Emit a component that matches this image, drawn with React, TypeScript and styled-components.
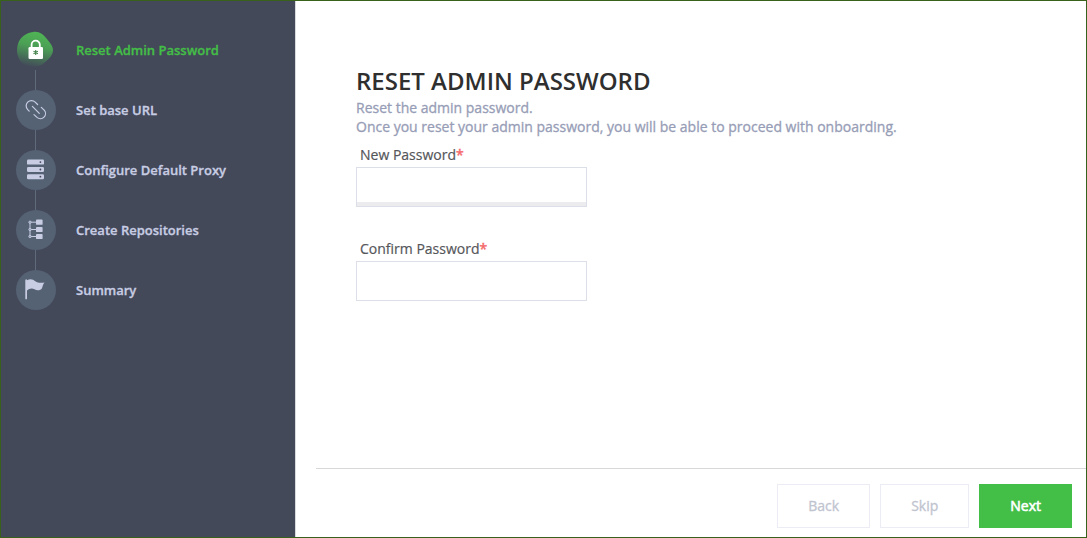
import React from "react";
import styled, { createGlobalStyle } from "styled-components";

const GlobalStyle = createGlobalStyle`
  *, *::before, *::after { box-sizing: border-box; }
  body { margin: 0; background: #fff; }
  body, button, input { font-family: "Open Sans", "Noto Sans", sans-serif; }
`;

const Wizard = styled.div`
  display: flex;
  min-height: 100vh;
  border: 1px solid #38611b;
`;

const Sidebar = styled.nav`
  flex: 0 0 295px;
  padding: 29px 15px;
  background: #434959;
  border-right: 1px solid #d8dadd;
`;

const StepList = styled.ol`
  display: flex;
  flex-direction: column;
  margin: 0;
  padding: 0;
  list-style: none;
`;

const Step = styled.li<{ $active?: boolean }>`
  display: grid;
  grid-template-columns: 40px 1fr;
  column-gap: 20px;
  align-items: center;
  font-size: 13px;
  line-height: 20px;
  font-weight: 600;
  -webkit-text-stroke: 0.3px currentColor;
  color: ${(p) => (p.$active ? "#43be47" : "#c8cde4")};

  &:not(:last-child)::after {
    content: "";
    width: 1px;
    height: 20px;
    margin-left: 19px;
    background: #5f6a7b;
  }
`;

const StepIcon = styled.span<{ $active?: boolean }>`
  display: flex;
  width: 40px;
  height: 40px;
  border-radius: 50%;
  background: ${(p) => (p.$active ? "none" : "#556274")};
  color: #c8cde4;
`;

const Main = styled.main`
  display: flex;
  flex: 1;
  flex-direction: column;
  min-width: 0;
`;

const Content = styled.form`
  flex: 1;
  padding: 63px 60px 24px;
`;

const Title = styled.h1`
  margin: 0 0 1px;
  font-size: 24px;
  line-height: 33px;
  font-weight: 600;
  color: #2f2f2f;
`;

const Description = styled.p`
  margin: 0 0 9px;
  font-size: 14px;
  line-height: 19px;
  color: #979db6;
  -webkit-text-stroke: 0.3px currentColor;
`;

const Field = styled.div`
  display: flex;
  flex-direction: column;
  width: 231px;
  margin-bottom: 32px;
`;

const Label = styled.label`
  padding-left: 4px;
  margin-bottom: 2px;
  font-size: 14px;
  line-height: 20px;
  color: #55565a;
  -webkit-text-stroke: 0.2px currentColor;
`;

const Required = styled.span`
  color: #f4696b;
  -webkit-text-stroke: 0.5px currentColor;
`;

const PasswordInput = styled.input<{ $raised?: boolean }>`
  width: 100%;
  height: 40px;
  padding: 0 10px;
  border: 1px solid #dcdfe8;
  border-radius: 0;
  background: #fff;
  font-size: 14px;
  outline: none;
  box-shadow: ${(p) => (p.$raised ? "inset 0 -4px 0 #ececee" : "none")};
`;

const Footer = styled.footer`
  display: flex;
  justify-content: flex-end;
  gap: 10px;
  margin-left: 20px;
  padding: 15px 14px 9px 0;
  border-top: 1px solid #d8d8da;
`;

const Button = styled.button<{ $primary?: boolean }>`
  height: 44px;
  padding: 0 30px;
  border: 1px solid ${(p) => (p.$primary ? "#43be47" : "#ececf4")};
  border-radius: 0;
  background: ${(p) => (p.$primary ? "#43be47" : "#fff")};
  color: ${(p) => (p.$primary ? "#fff" : "#c0c4cf")};
  font-size: 14px;
  line-height: 20px;
  font-weight: 400;
  -webkit-text-stroke: ${(p) => (p.$primary ? "0.6px" : "0.3px")} currentColor;
`;

const Drawing = ({ children }: { children: React.ReactNode }) => (
  <svg width="40" height="40" viewBox="0 0 40 40" fill="none" aria-hidden="true">
    {children}
  </svg>
);

const LockIcon = () => (
  <Drawing>
    <defs>
      <linearGradient id="blob" x1="24" y1="3" x2="17" y2="37" gradientUnits="userSpaceOnUse">
        <stop offset="0" stopColor="#4fb454" />
        <stop offset="0.4" stopColor="#4b9f55" />
        <stop offset="1" stopColor="#434b59" />
      </linearGradient>
    </defs>
    <path
      d="M17 2C23 1 27 4 31 9C34 13 37 16 37 20C37 25 33 29 28 33C23 38 12 38 6 33C1 28 0 20 2 14C4 7 10 3 17 2Z"
      fill="url(#blob)"
    />
    <path d="M15.6 18V14.8a4.1 4.1 0 0 1 8.2 0V18" stroke="#fff" strokeWidth="1.8" />
    <rect x="12.5" y="17" width="14.5" height="12" rx="1.3" fill="#fff" />
    <path d="M19.7 20v5M17.5 21.3l4.4 2.5M21.9 21.3l-4.4 2.5" stroke="#43834c" strokeWidth="1.1" />
  </Drawing>
);

const LinkIcon = () => (
  <Drawing>
    <g stroke="currentColor" strokeWidth="1.2" strokeLinecap="round">
      <path d="M13.2 21.1L11.7 19.6A5.3 5.3 0 0 1 19.2 12.1L21.6 14.5" />
      <path d="M16.4 16.4L23.3 23.3" />
      <path d="M18 24.6L21 27.4A5.1 5.1 0 0 0 28.2 20.2L25.3 17.3" />
    </g>
  </Drawing>
);

const ServerIcon = () => (
  <Drawing>
    {[9.6, 17, 24.2].map((y) => (
      <g key={y}>
        <rect x="11" y={y} width="17" height="5" rx="1.2" fill="currentColor" />
        <circle cx="24.4" cy={y + 2.5} r="0.9" fill="#434959" />
      </g>
    ))}
  </Drawing>
);

const RepositoryIcon = () => (
  <Drawing>
    <path d="M14 12.2V26.5M14 12.2h7M14 19.5h7M14 26.5h7" stroke="currentColor" strokeWidth="1" />
    {[12.2, 19.5, 26.5].map((y) => (
      <g key={y}>
        <circle cx="14" cy={y} r="1.2" fill="#8f99ae" stroke="currentColor" strokeWidth="0.8" />
        <rect x="20" y={y - 2.6} width="6.6" height="5.2" rx="0.9" fill="currentColor" />
      </g>
    ))}
  </Drawing>
);

const FlagIcon = () => (
  <Drawing>
    <path
      d="M9.3 10.2c0-1 1.7-1.2 1.7 0C14 8.5 17 9 19.3 11.2C22 13 25 13 28.5 12.4C27 14 26.7 16 26 18.2C24.5 20.5 21 20.9 18.5 19.3C15.8 17.7 13 18.6 11 20.6V28.4a.8.8 0 0 1-1.7 0Z"
      fill="currentColor"
    />
  </Drawing>
);

const steps = [
  { label: "Reset Admin Password", Icon: LockIcon },
  { label: "Set base URL", Icon: LinkIcon },
  { label: "Configure Default Proxy", Icon: ServerIcon },
  { label: "Create Repositories", Icon: RepositoryIcon },
  { label: "Summary", Icon: FlagIcon },
];

export default function App() {
  return (
    <>
      <GlobalStyle />
      <Wizard>
        <Sidebar>
          <StepList>
            {steps.map(({ label, Icon }, i) => (
              <Step key={label} $active={i === 0} aria-current={i === 0 ? "step" : undefined}>
                <StepIcon $active={i === 0}>
                  <Icon />
                </StepIcon>
                <span>{label}</span>
              </Step>
            ))}
          </StepList>
        </Sidebar>
        <Main>
          <Content id="password-form" onSubmit={(e) => e.preventDefault()}>
            <Title>RESET ADMIN PASSWORD</Title>
            <Description>
              Reset the admin password.
              <br />
              Once you reset your admin password, you will be able to proceed with onboarding.
            </Description>
            <Field>
              <Label htmlFor="new-password">
                New Password<Required>*</Required>
              </Label>
              <PasswordInput id="new-password" type="password" required $raised />
            </Field>
            <Field>
              <Label htmlFor="confirm-password">
                Confirm Password<Required>*</Required>
              </Label>
              <PasswordInput id="confirm-password" type="password" required />
            </Field>
          </Content>
          <Footer>
            <Button type="button">Back</Button>
            <Button type="button">Skip</Button>
            <Button type="submit" form="password-form" $primary>
              Next
            </Button>
          </Footer>
        </Main>
      </Wizard>
    </>
  );
}
